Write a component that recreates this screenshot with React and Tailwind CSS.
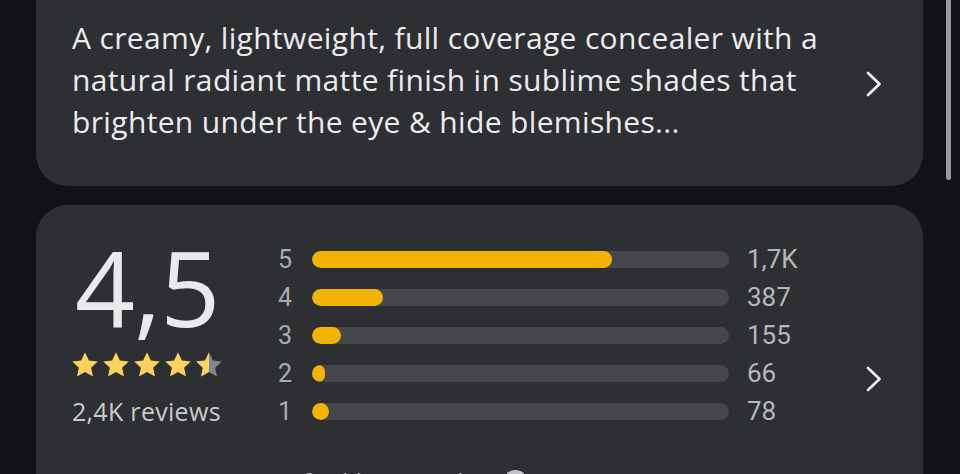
import React from 'react';

const bars = [
  { label: '5', pct: 72, count: '1,7K' },
  { label: '4', pct: 17, count: '387' },
  { label: '3', pct: 7, count: '155' },
  { label: '2', pct: 3, count: '66' },
  { label: '1', pct: 4, count: '78' },
];

const STAR = 'M12 1.8l3.1 6.6 7.1.8-5.3 4.9 1.5 7.1L12 17.6l-6.4 3.6 1.5-7.1L1.8 9.2l7.1-.8L12 1.8z';

const Star = ({ half }) => (
  <svg width="30" height="30" viewBox="0 0 24 24">
    {half ? (
      <>
        <defs>
          <clipPath id="leftHalf">
            <rect x="0" y="0" width="12" height="24" />
          </clipPath>
        </defs>
        <path d={STAR} fill="#80868b" />
        <path d={STAR} fill="#fcd15f" clipPath="url(#leftHalf)" />
      </>
    ) : (
      <path d={STAR} fill="#fcd15f" />
    )}
  </svg>
);

const Chevron = () => (
  <svg width="16" height="26" viewBox="0 0 16 26" fill="none">
    <polyline points="2,2 13.5,13 2,24" stroke="#f1f1f3" strokeWidth="2.6" strokeLinecap="round" strokeLinejoin="round" />
  </svg>
);

const lines = [
  'A creamy, lightweight, full coverage concealer with a',
  'natural radiant matte finish in sublime shades that',
  'brighten under the eye & hide blemishes...',
];

export default function App() {
  return (
    <div className="h-[474px] w-[960px] overflow-hidden bg-[#111216] font-['Open_Sans',sans-serif] flex">
      {/* Cards column */}
      <div className="ml-[36px] w-[887px] flex flex-col">
        {/* Description card */}
        <div className="-mt-[40px] rounded-[32px] bg-[#2e2f33] pt-[57px] pb-[43px] pl-[36px] pr-[41px] flex items-center">
          <div className="w-[796px] text-[30px] leading-[42px] tracking-[0.35px] text-[#ececee]">
            {lines.map((l) => (
              <div key={l} className="whitespace-nowrap">{l}</div>
            ))}
          </div>
          <div className="pt-[8px]">
            <Chevron />
          </div>
        </div>

        {/* Ratings card */}
        <div className="mt-[19px] rounded-[32px] bg-[#2e2f33] pl-[36px] pr-[41px] pt-[29px] flex items-start">
          <div className="w-[796px] flex flex-col">
            <div className="flex">
              <div className="w-[206px] flex flex-col">
                <div className="h-[105px] ml-[3px] text-[105px] leading-[105px] text-[#eaeaec] tracking-[-1px]">4,5</div>
                <div className="mt-[11px] flex gap-[1px] -ml-[2px]">
                  <Star />
                  <Star />
                  <Star />
                  <Star />
                  <Star half />
                </div>
                <div className="mt-[17px] text-[25px] leading-[28px] tracking-[0.3px] text-[#c9cacd]">2,4K reviews</div>
              </div>
              <div className="pt-[6px] flex flex-col font-[Roboto,sans-serif]">
                {bars.map((b) => (
                  <div key={b.label} className="h-[38px] flex items-center">
                    <span className="w-[34px] text-[25px] leading-none text-[#a9abaf]">{b.label}</span>
                    <div className="w-[417px] h-[17px] rounded-full bg-[#46474b] overflow-hidden">
                      <div
                        className="h-full rounded-full bg-[#f3b304] min-w-[13px]"
                        style={{ width: `${b.pct}%` }}
                      />
                    </div>
                    <span className="ml-[18px] text-[26px] leading-none text-[#b5b7bb]">{b.count}</span>
                  </div>
                ))}
              </div>
            </div>
            <div className="mt-[38px] flex items-center gap-[24px] text-[26px] leading-[28px] tracking-[0.2px] text-[#b5b7bb]">
              <span>Reviews aren't verified by Google</span>
              <span className="w-[25px] h-[25px] rounded-full bg-[#c4c5ca] text-[#2e2f33] text-[16px] font-bold flex items-center justify-center">i</span>
            </div>
            <div className="h-[40px]" />
          </div>
          <div className="mt-[132px]">
            <Chevron />
          </div>
        </div>
      </div>

      {/* Scrollbar */}
      <div className="ml-[23px] w-[5px] h-[180px] rounded-b-full bg-[#9a9a9c]" />
    </div>
  );
}
